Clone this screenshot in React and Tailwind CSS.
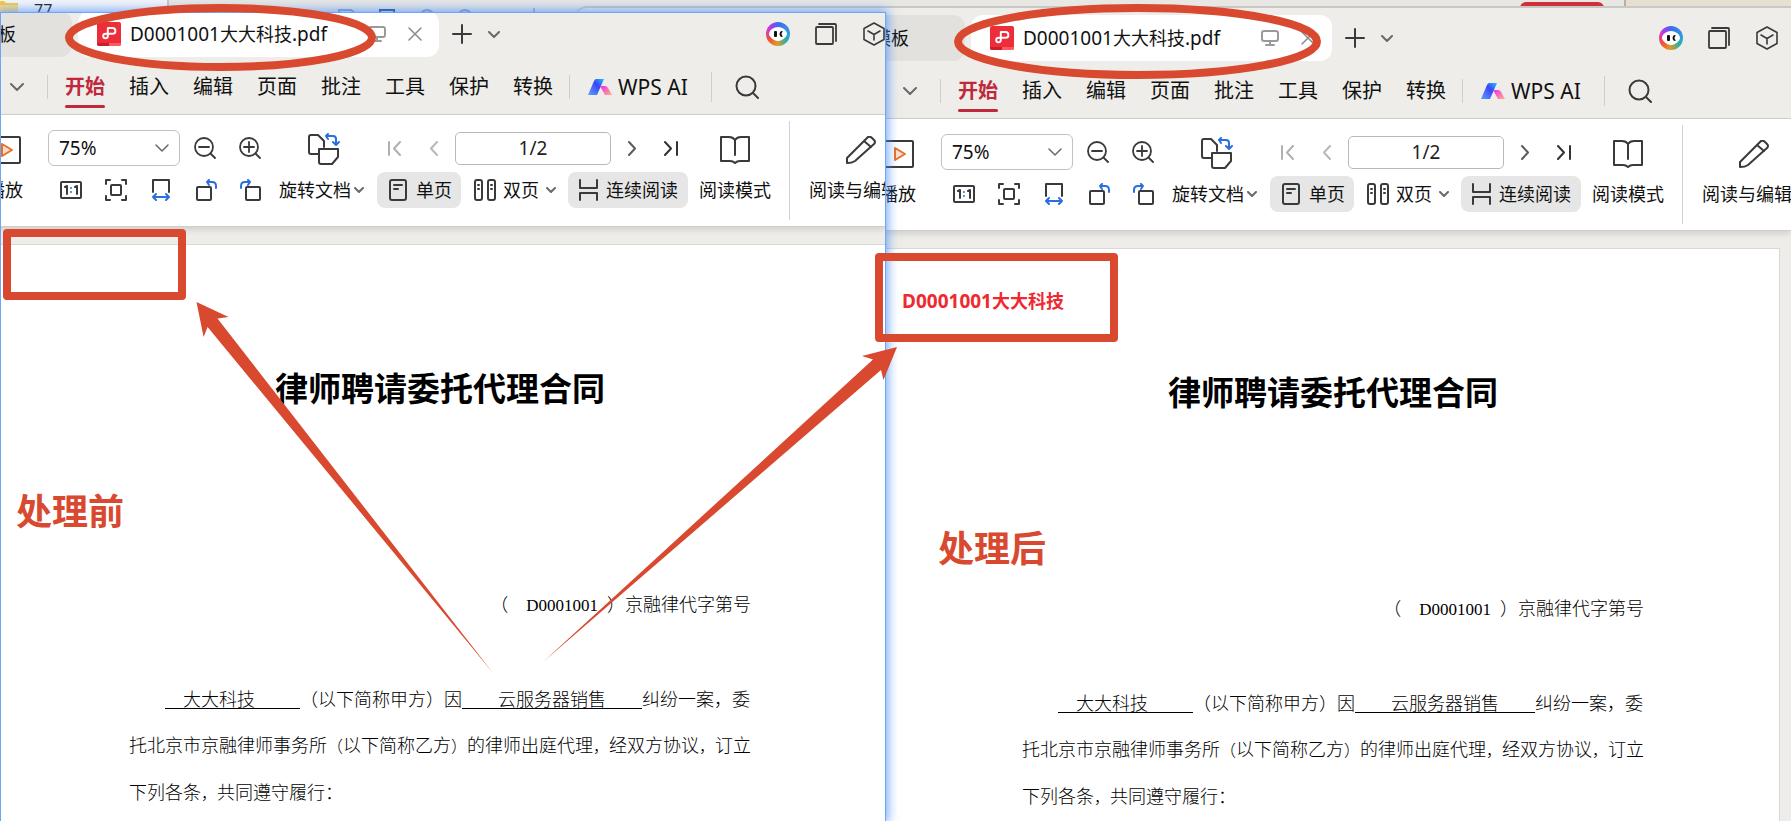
import React from "react";

const menuItems = ["开始", "插入", "编辑", "页面", "批注", "工具", "保护", "转换"];

const Icon = ({ w, h, className = "text-[#3a3a3a]", stroke = 2, children }) => (
  <svg
    width={w}
    height={h}
    viewBox={`0 0 ${w} ${h}`}
    fill="none"
    stroke="currentColor"
    strokeWidth={stroke}
    strokeLinecap="round"
    strokeLinejoin="round"
    className={`shrink-0 ${className}`}
    aria-hidden="true"
  >
    {children}
  </svg>
);

const Chevron = ({ w = 12, h = 7, className = "text-[#6a6a6a]", stroke = 2 }) => (
  <Icon w={w} h={h} className={className} stroke={stroke}>
    <path d={`M1 1L${w / 2} ${h - 1}L${w - 1} 1`} />
  </Icon>
);

const PdfIcon = () => (
  <svg width="24" height="24" viewBox="0 0 24 24" className="shrink-0" aria-hidden="true">
    <rect width="24" height="24" rx="2" fill="#ee2d3b" />
    <path d="M0 21H12V24H2Q0 24 0 22Z" fill="#c91f2c" />
    <path d="M12 21H24V22Q24 24 22 24H12Z" fill="#ff5a62" />
    <path
      d="M10.500 6H15.500A2.900 2.900 0 0 1 15.500 11.800H8.500A2.300 2.300 0 1 0 10.800 14.100V5.500"
      fill="none"
      stroke="#fff"
      strokeWidth="1.900"
    />
  </svg>
);

const WpsAiLogo = () => (
  <svg width="24" height="18" viewBox="0 0 24 18" className="shrink-0" aria-hidden="true">
    <defs>
      <linearGradient id="aiBlue" x1="0" y1="1" x2="1" y2="0">
        <stop offset="0" stopColor="#5aa2ff" />
        <stop offset="0.6" stopColor="#3a45f5" />
        <stop offset="1" stopColor="#22c4ff" />
      </linearGradient>
      <linearGradient id="aiPink" x1="0" y1="0" x2="1" y2="1">
        <stop offset="0" stopColor="#f02be8" />
        <stop offset="1" stopColor="#ffb08a" />
      </linearGradient>
    </defs>
    <path d="M8 1H16L9 17H0L6 3Q7 1 8 1Z" fill="url(#aiBlue)" />
    <path d="M12 8H17Q19 8 20 10L24 17H17Z" fill="url(#aiPink)" />
  </svg>
);

const Avatar = () => (
  <span className="grid size-6 shrink-0 place-items-center rounded-full bg-[conic-gradient(#3b6df0,#2f9fe0_90deg,#2fb0a0_130deg,#e09a20_185deg,#f0503c_240deg,#d838c8_290deg,#8a48f0_330deg,#3b6df0)]">
    <svg width="20" height="16" viewBox="0 0 20 16" aria-hidden="true">
      <path d="M10 1C14 1 19 4 19 8C19 10 15 15 10 15C5 15 1 10 1 8C1 4 6 1 10 1Z" fill="#fff" />
      <rect x="6" y="5" width="3" height="6" rx="1" fill="#111" />
      <path d="M15 5.500Q12 8 15 10.500L13 11Q10 8 13 5Z" fill="#111" />
    </svg>
  </span>
);

const TitleBar = () => (
  <div className="flex h-[53px] min-w-max items-center pt-[7px]">
    <div className="flex h-full w-[110px] items-center rounded-r-xl bg-[#e2e1dd] pl-[18px] text-[18px]">
      模板
    </div>
    <div className="ml-[6px] flex h-full w-[361px] items-center rounded-xl bg-white pl-[19px] pr-[17px]">
      <PdfIcon />
      <span className="ml-[9px] text-[19px] whitespace-nowrap">
        D0001001<span className="text-[18px]">大大科技</span>.pdf
      </span>
      <Icon w={18} h={16} stroke={2} className="ml-auto text-[#9a9a9a]">
        <rect x="1" y="1" width="16" height="10" rx="2" />
        <path d="M9 11V14M5 15H13" />
      </Icon>
      <button aria-label="关闭" className="ml-[22px]">
        <Icon w={14} h={14} stroke={1.5} className="text-[#8a8a8a]">
          <path d="M1 1L13 13M13 1L1 13" />
        </Icon>
      </button>
    </div>
    <button aria-label="新建" className="ml-[13px]">
      <Icon w={20} h={20}>
        <path d="M10 1V19M1 10H19" />
      </Icon>
    </button>
    <button aria-label="标签列表" className="ml-4">
      <Chevron />
    </button>
    <button aria-label="账号" className="ml-[266px]">
      <Avatar />
    </button>
    <button aria-label="窗口" className="ml-[25px]">
      <Icon w={22} h={22} stroke={1.8}>
        <rect x="1" y="4" width="17" height="17" rx="1" />
        <path d="M4 1H20Q21 1 21 2V18" />
      </Icon>
    </button>
    <button aria-label="应用" className="ml-[26px]">
      <Icon w={22} h={24} stroke={1.6}>
        <path d="M11 1L21 6.500V17.500L11 23L1 17.500V6.500ZM5 9L11 12.500L17 9M11 12.500V18" />
      </Icon>
    </button>
  </div>
);

const MenuBar = () => (
  <div className="h-[58px] border-b border-[#d3d2cd] pt-4">
    <div className="flex h-7 min-w-max items-center pl-12">
      <button aria-label="更多">
        <Chevron w={14} h={8} />
      </button>
      <span className="ml-[23px] h-6 w-px bg-[#cfcfca]" />
      <div className="ml-[17px] flex gap-6">
        {menuItems.map((item, i) => (
          <button
            key={item}
            className={
              i === 0
                ? "flex h-7 flex-col text-[20px] leading-7 font-bold text-[#c0283c]"
                : "flex h-7 flex-col text-[20px] leading-7"
            }
          >
            {item}
            {i === 0 && <span className="mt-1 h-[3px] w-full shrink-0 rounded-full bg-[#c0283c]" />}
          </button>
        ))}
      </div>
      <span className="ml-4 h-6 w-px bg-[#cfcfca]" />
      <button className="ml-[18px] flex items-center gap-[6px] text-[21px] leading-7">
        <WpsAiLogo />
        WPS AI
      </button>
      <span className="ml-[23px] h-[30px] w-px bg-[#cfcfca]" />
      <button aria-label="搜索" className="ml-[23px]">
        <Icon w={24} h={24}>
          <circle cx="11" cy="11" r="9.500" />
          <path d="M18 18L23 23" />
        </Icon>
      </button>
    </div>
  </div>
);

const ZoomGlass = ({ plus }) => (
  <Icon w={22} h={22} stroke={1.8}>
    <circle cx="10" cy="10" r="9" />
    <path d={plus ? "M5 10H15M10 5V15M16.500 16.500L21 21" : "M5 10H15M16.500 16.500L21 21"} />
  </Icon>
);

const ToolBar = ({ id }) => (
  <div className="relative h-[112px] border-b border-[#d0cfca] bg-white pt-[15px] text-[18px] shadow-[0_3px_6px_rgba(0,0,0,0.12)]">
    <div className="flex min-w-max items-start pl-[25px] leading-9">
      <button className="flex w-9 flex-col items-center gap-[6px]">
        <span className="flex h-9 items-end">
          <Icon w={32} h={30}>
            <rect x="1" y="1" width="30" height="26" rx="1" />
            <path d="M13 8L23 14L13 20Z" fill="#fde0cc" stroke="#e8702a" />
          </Icon>
        </span>
        播放
      </button>

      <div className="ml-[25px] flex flex-col gap-[6px]">
        <div className="flex h-9 items-center">
          <div className="relative">
            <select
              id={`zoom-${id}`}
              aria-label="缩放"
              defaultValue="75%"
              className="h-9 w-[132px] appearance-none rounded-md border border-[#c2c2c2] bg-white pl-[10px] text-[19px] leading-8"
            >
              <option>75%</option>
              <option>100%</option>
            </select>
            <span className="pointer-events-none absolute top-3.5 right-[11px]">
              <Chevron w={14} h={8} stroke={1.5} />
            </span>
          </div>
          <button aria-label="缩小" className="ml-[14px]">
            <ZoomGlass />
          </button>
          <button aria-label="放大" className="ml-[23px]">
            <ZoomGlass plus />
          </button>
        </div>
        <div className="flex h-9 items-center gap-[23px] pl-3">
          <button aria-label="实际大小">
            <Icon w={22} h={22}>
              <rect x="1" y="3" width="20" height="16" rx="1" />
              <path d="M5 8L7 7V15M15 8L17 7V15" />
              <path d="M11 9V9.100M11 13V13.100" stroke="#2a6fe0" />
            </Icon>
          </button>
          <button aria-label="适合页面">
            <Icon w={22} h={22}>
              <path d="M1 5V1H5M17 1H21V5M21 17V21H17M5 21H1V17" />
              <rect x="6" y="6" width="10" height="10" rx="1" />
            </Icon>
          </button>
          <button aria-label="适合宽度">
            <Icon w={22} h={22}>
              <path d="M3 13V1H19V13" />
              <path d="M3 18H19M6 15L3 18L6 21M16 15L19 18L16 21" stroke="#2a6fe0" />
            </Icon>
          </button>
          <button aria-label="向左旋转">
            <Icon w={22} h={22}>
              <rect x="2" y="8" width="14" height="13" rx="1" />
              <path d="M21 9V7Q21 3 17 3H12M14 1L12 3L14 6" stroke="#2a6fe0" />
            </Icon>
          </button>
          <button aria-label="向右旋转">
            <Icon w={22} h={22}>
              <rect x="6" y="8" width="14" height="13" rx="1" />
              <path d="M1 9V7Q1 3 5 3H10M8 1L10 3L8 6" stroke="#2a6fe0" />
            </Icon>
          </button>
        </div>
      </div>

      <button className="ml-[17px] flex flex-col items-center gap-[6px]">
        <span className="flex h-9 items-end pl-1">
          <Icon w={32} h={33}>
            <path d="M10 21H3Q1 21 1 19V4Q1 2 3 2H10L16 8V14" />
            <path d="M11 16H30V24L24 31H13Q11 31 11 29Z" />
            <path d="M18 3H25Q28 3 28 6V11M20 1L18 3L20 6M25 9L28 12L31 9" stroke="#2a6fe0" />
          </Icon>
        </span>
        <span className="flex items-center gap-[3px]">
          旋转文档
          <Chevron w={10} h={6} />
        </span>
      </button>

      <div className="ml-[13px] flex flex-col gap-[6px]">
        <div className="flex h-9 items-center pl-[11px]">
          <button aria-label="第一页">
            <Icon w={14} h={15} className="text-[#b0b0b0]">
              <path d="M1 1V14M12 1L6 7.500L12 14" />
            </Icon>
          </button>
          <button aria-label="上一页" className="ml-[27px]">
            <Icon w={9} h={15} className="text-[#b8b8b8]">
              <path d="M8 1L2 7.500L8 14" />
            </Icon>
          </button>
          <input
            id={`page-${id}`}
            aria-label="页码"
            defaultValue="1/2"
            className="ml-[17px] h-[33px] w-[156px] rounded-[5px] border border-[#b9b9b9] bg-white text-center text-[19px] text-[#222]"
          />
          <button aria-label="下一页" className="ml-[17px]">
            <Icon w={9} h={15} className="text-[#5c5c5c]">
              <path d="M1 1L7 7.500L1 14" />
            </Icon>
          </button>
          <button aria-label="最后一页" className="ml-[27px]">
            <Icon w={14} h={15} className="text-[#333]">
              <path d="M1 1L7 7.500L1 14M13 1V14" />
            </Icon>
          </button>
        </div>
        <div className="flex h-9 items-center">
          <button className="flex h-9 w-[84px] items-center gap-[9px] rounded-lg bg-[#e6e6e6] pl-3">
            <Icon w={18} h={22}>
              <rect x="1" y="1" width="16" height="20" rx="2" />
              <path d="M5 6H13M5 10H9" />
            </Icon>
            单页
          </button>
          <button className="ml-[13px] flex items-center gap-[7px]">
            <Icon w={22} h={22}>
              <rect x="1" y="1" width="7" height="20" rx="2" />
              <rect x="14" y="1" width="7" height="20" rx="2" />
              <path d="M4 6H5M4 10H5M17 6H18M17 10H18" />
            </Icon>
            双页
            <Chevron w={10} h={6} />
          </button>
          <button className="ml-3 flex h-9 w-[120px] items-center gap-2 rounded-lg bg-[#e6e6e6] pl-[11px]">
            <Icon w={19} h={22}>
              <path d="M1 1V9H18V1M1 21V14H18V21" />
            </Icon>
            连续阅读
          </button>
        </div>
      </div>

      <button className="ml-[11px] flex flex-col items-center gap-[6px]">
        <span className="flex h-9 items-end">
          <Icon w={30} h={30}>
            <path d="M15 4Q13 1 9 1H1V25H10Q13 25 15 27Q17 25 20 25H29V1H21Q17 1 15 4V19" />
          </Icon>
        </span>
        阅读模式
      </button>
      <span className="-mt-[9px] ml-[18px] h-[99px] w-px bg-[#d2d2d2]" />
      <button className="ml-[19px] flex flex-col items-center gap-[6px]">
        <span className="flex h-9 items-end">
          <Icon w={30} h={30}>
            <path d="M1 27V22L22 1Q24 0 26 2L28 4Q30 6 28 8L9 25Q6 27 1 27ZM18 5L25 11" />
          </Icon>
        </span>
        <span className="flex items-center gap-1">
          阅读与编辑
          <Chevron w={10} h={6} />
        </span>
      </button>
    </div>
  </div>
);

const Mark = ({ children }) => <span className="text-[16px]">{children}</span>;

const Contract = ({ code, company }) => (
  <article className="mt-[17px] h-[900px] w-[925px] border-t border-r border-[#d9d8d2] bg-white pt-10 text-black">
    <p className="h-6 pl-[47px] text-[19px] leading-6 font-bold text-[#ee2a30]">
      {code}
      <span className="text-[18px]">{company}</span>
    </p>
    <div className="mt-14 ml-[167px] w-[622px] font-['Noto_Sans_CJK_SC',sans-serif]">
      <h1 className="text-center text-[33px] leading-[44px] font-bold">律师聘请委托代理合同</h1>
      <div className="mt-[171px] text-[18px] leading-[46px] font-light whitespace-pre">
        <p className="flex items-baseline justify-end">
          <span>（</span>
          <span className="ml-[18px] font-['Liberation_Serif',serif] text-[17px]">D0001001</span>
          <span className="ml-[9px]">）京融律代字第号</span>
        </p>
        <p className="mt-[46px] flex pl-9">
          <span className="flex items-center">
            <span className="h-[22px] w-[135px] border-b border-black pl-[18px] leading-[22px]">大大科技</span>
          </span>
          （以下简称甲方）因
          <span className="flex items-center">
            <span className="h-[22px] w-[180px] border-b border-black pl-9 leading-[22px]">云服务器销售</span>
          </span>
          纠纷一案，委
        </p>
        <p>
          托北京市京融律师事务所<Mark>（</Mark>以下简称乙方<Mark>）</Mark>的律师出庭代理<Mark>，</Mark>
          经双方协议<Mark>，</Mark>订立
        </p>
        <p>
          下列各条<Mark>，</Mark>共同遵守履行：
        </p>
      </div>
    </div>
  </article>
);

const ReaderWindow = ({ id, code, company }) => (
  <div className="bg-[#eeede9]">
    <TitleBar />
    <MenuBar />
    <ToolBar id={id} />
    <Contract code={code} company={company} />
  </div>
);

// strips of the windows that sit behind both readers
const Backdrop = () => (
  <div className="flex h-5 bg-[#e8e7e4] text-[16px] leading-5 text-[#222]">
    <div className="flex w-[169px] items-start border-r-2 border-[#c4c6cc] bg-[#f3f4f7]">
      <svg width="18" height="13" viewBox="0 0 18 13" aria-hidden="true">
        <path d="M0 1H4L6 3H18V13H0Z" fill="#f7c948" />
        <path d="M0 5H18V13H0Z" fill="#fbdc83" />
      </svg>
      <span className="ml-4">77</span>
    </div>
    <div className="flex-1 pl-[168px]">
      <svg width="240" height="13" viewBox="0 0 240 13" fill="none" strokeWidth="2" aria-hidden="true">
        <path d="M2 13V10H14L18 13M84 13Q90 7 96 13M122 13Q128 7 134 13" stroke="#8da0bf" />
        <path d="M43 13V10H57V13" stroke="#2f4f88" />
        <path d="M197 8V13" stroke="#aab4c4" />
      </svg>
    </div>
    <div className="mt-[2px] mr-5 h-3 w-[84px] rounded-t-md bg-[#d12f3c]" />
    <div className="w-[167px] border-l-2 border-[#b5b0a8] bg-[#e6dfd2]" />
  </div>
);

const Annotations = () => (
  <div className="pointer-events-none absolute inset-0 text-[36px] leading-none font-bold text-[#d8492f]">
    <svg className="absolute top-0 left-0" width="1791" height="821" viewBox="0 0 1791 821" aria-hidden="true">
      <g fill="none" stroke="#d8492f" strokeWidth="8">
        <ellipse cx="220.500" cy="37.500" rx="151.500" ry="29.500" />
        <ellipse cx="1137.500" cy="41.500" rx="179.500" ry="33.500" />
      </g>
      <g fill="#d8492f">
        <path d="M196.500 302L228.500 317L217.500 318.500L493 673L207.600 327L203.600 337Z" />
        <path d="M897 347L862 356L873 359.500L543 662L881 370L883.500 380Z" />
      </g>
    </svg>
    <div className="absolute top-[229px] left-[3px] h-[71px] w-[183px] rounded border-8 border-[#d8492f]" />
    <div className="absolute top-[253px] left-[875px] h-[89px] w-[243px] rounded border-8 border-[#d8492f]" />
    <p className="absolute top-[494px] left-4">处理前</p>
    <p className="absolute top-[531px] left-[938px]">处理后</p>
  </div>
);

export default function App() {
  return (
    <div className="relative h-screen overflow-hidden bg-[#e8e7e4] font-['Noto_Sans','Noto_Sans_CJK_SC',sans-serif] text-[#111]">
      <Backdrop />
      <div className="absolute top-[6px] right-0 bottom-0 left-[575px] rounded-tl-xl border-t-2 border-[#c9c8c3] bg-[#eeede9]" />
      <div className="absolute top-2 right-0 bottom-0 left-[855px] overflow-hidden">
        <ReaderWindow id="after" code="D0001001" company="大大科技" />
      </div>
      <div className="absolute top-3 bottom-0 left-0 w-[886px] overflow-hidden border border-b-0 border-[#6fa5f5] shadow-[0_0_10px_2px_rgba(70,140,250,0.75)]">
        <div className="-mt-[9px] -ml-[39px]">
          <ReaderWindow id="before" />
        </div>
      </div>
      <Annotations />
    </div>
  );
}
